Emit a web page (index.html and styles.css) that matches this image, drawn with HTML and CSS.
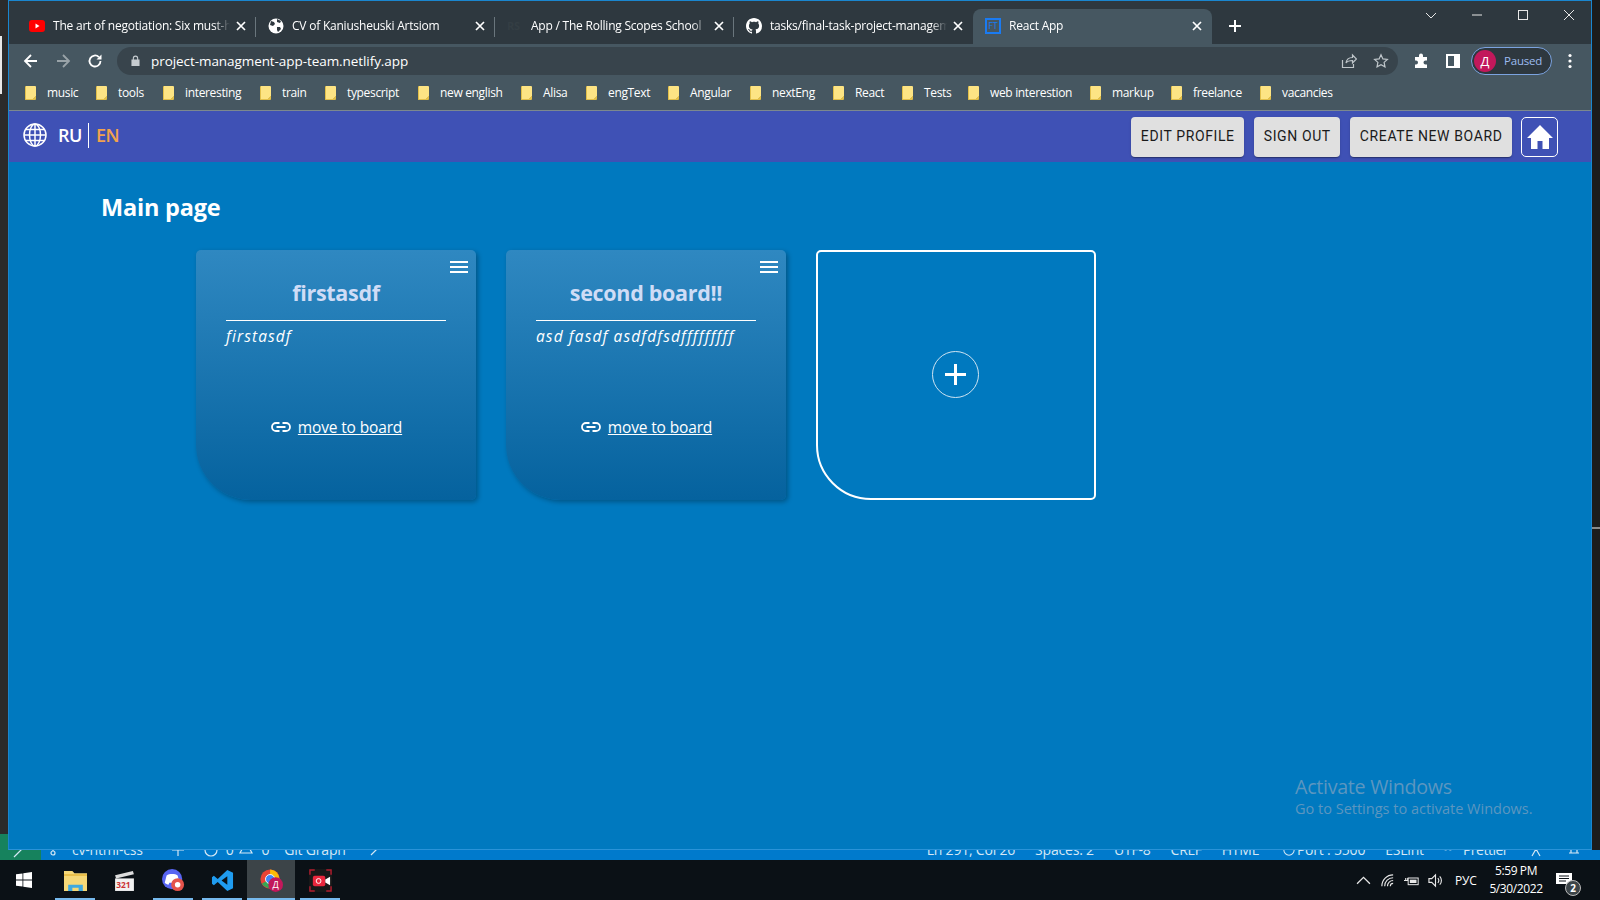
FILE: index.html
```html
<!DOCTYPE html>
<html lang="en">
<head>
<meta charset="utf-8">
<title>React App</title>
<link rel="stylesheet" href="styles.css">
</head>
<body>
<div class="desktop">
  <div class="upper">
    <div class="strip-left"><span class="strip-mark"></span></div>
    <div class="browser">
      <div class="tabstrip">
        <div class="tab">
          <svg class="fav" viewBox="0 0 16 12"><rect width="16" height="12" rx="3" fill="#f00"/><path d="M6.500 3.500v5l4-2.500z" fill="#fff"/></svg>
          <span class="tab-title">The art of negotiation: Six must-have skills</span>
          <svg class="tab-x" viewBox="0 0 10 10"><path d="M1 1l8 8M9 1l-8 8"/></svg>
        </div>
        <div class="tab">
          <svg class="fav" viewBox="0 0 16 16"><circle cx="8" cy="8" r="7.500" fill="#fff"/><path d="M3 3l3 1 1 2-2 2-3-1zM9 9l3 0 1 2-3 3-1-2zM9 1l4 2-1 2-3-1z" fill="#2e383f"/></svg>
          <span class="tab-title">CV of Kaniusheuski Artsiom</span>
          <svg class="tab-x" viewBox="0 0 10 10"><path d="M1 1l8 8M9 1l-8 8"/></svg>
        </div>
        <div class="tab">
          <span class="fav fav-rs">RS</span>
          <span class="tab-title">App / The Rolling Scopes School</span>
          <svg class="tab-x" viewBox="0 0 10 10"><path d="M1 1l8 8M9 1l-8 8"/></svg>
        </div>
        <div class="tab">
          <svg class="fav" viewBox="0 0 16 16"><path fill="#fff" d="M8 0C3.580 0 0 3.580 0 8c0 3.540 2.290 6.530 5.470 7.590.4.070.55-.17.55-.38 0-.19-.01-.82-.01-1.490-2.010.37-2.530-.49-2.690-.94-.09-.23-.48-.94-.82-1.130-.28-.15-.68-.52-.01-.53.63-.01 1.080.58 1.230.82.72 1.210 1.870.87 2.330.66.070-.52.28-.87.51-1.070-1.780-.2-3.640-.89-3.640-3.950 0-.87.31-1.590.82-2.150-.08-.2-.36-1.020.08-2.120 0 0 .67-.21 2.200.82.640-.18 1.320-.27 2-.27s1.360.09 2 .27c1.530-1.040 2.200-.82 2.200-.82.44 1.100.16 1.920.08 2.120.51.560.82 1.270.82 2.150 0 3.070-1.870 3.750-3.650 3.950.29.250.54.730.54 1.480 0 1.070-.01 1.930-.01 2.200 0 .21.150.46.550.38A8.010 8.010 0 0 0 16 8c0-4.420-3.580-8-8-8z"/></svg>
          <span class="tab-title">tasks/final-task-project-management.md at main</span>
          <svg class="tab-x" viewBox="0 0 10 10"><path d="M1 1l8 8M9 1l-8 8"/></svg>
        </div>
        <div class="tab tab-active">
          <span class="fav fav-ft">FT</span>
          <span class="tab-title">React App</span>
          <svg class="tab-x" viewBox="0 0 10 10"><path d="M1 1l8 8M9 1l-8 8"/></svg>
        </div>
        <svg class="tab-new" viewBox="0 0 12 12"><path d="M6 0v12M0 6h12"/></svg>
        <div class="win-controls">
          <svg class="win-btn" viewBox="0 0 12 12"><path d="M1 4l5 5 5-5"/></svg>
          <svg class="win-btn" viewBox="0 0 12 12"><path d="M1 6h10"/></svg>
          <svg class="win-btn" viewBox="0 0 12 12"><rect x="1.500" y="1.500" width="9" height="9"/></svg>
          <svg class="win-btn" viewBox="0 0 12 12"><path d="M1 1l10 10M11 1L1 11"/></svg>
        </div>
      </div>
      <div class="toolbar">
        <svg class="nav-ico" viewBox="0 0 16 16"><path d="M14 8H2M8 2L2 8l6 6" /></svg>
        <svg class="nav-ico nav-off" viewBox="0 0 16 16"><path d="M2 8h12M8 2l6 6-6 6"/></svg>
        <svg class="nav-ico" viewBox="0 0 16 16"><path d="M13.500 8a5.500 5.500 0 1 1-1.600-3.900"/><path class="solid" d="M14.500 1.500v5h-5z"/></svg>
        <div class="omnibox">
          <svg class="lock" viewBox="0 0 10 12"><path d="M2 5V3.500a3 3 0 0 1 6 0V5h1.500v7H.5V5zM3.200 5h3.600V3.500a1.800 1.800 0 0 0-3.600 0z"/></svg>
          <span class="url">project-managment-app-team.netlify.app</span>
          <svg class="omni-ico" viewBox="0 0 16 16"><path d="M1.500 7v7.500h11V11"/><path d="M5 10c.5-3.500 3-5.500 6.500-5.500V2l4 4-4 4V7.500C9 7.500 6.500 8 5 10z"/></svg>
          <svg class="omni-ico" viewBox="0 0 16 16"><path d="M8 1.800l1.900 4.100 4.500.5-3.300 3 .9 4.500L8 11.700l-4 2.200.9-4.500-3.300-3 4.500-.5z"/></svg>
        </div>
        <svg class="ext-ico" viewBox="0 0 16 16"><path d="M6 2.500a2 2 0 0 1 4 0V4h4v3.500h-1.500a2 2 0 0 0 0 4H14V15H2v-3.500h1a2 2 0 0 0 0-4H2V4h4z"/></svg>
        <svg class="panel-ico" viewBox="0 0 14 14"><path fill="#fff" fill-rule="evenodd" d="M0 0h14v14H0zM2 2v10h6V2z"/></svg>
        <div class="profile"><span class="avatar">Д</span><span class="paused">Paused</span></div>
        <svg class="kebab" viewBox="0 0 4 16"><circle cx="2" cy="2.500" r="1.600"/><circle cx="2" cy="8" r="1.600"/><circle cx="2" cy="13.500" r="1.600"/></svg>
      </div>
      <div class="bookmarks">
        <div class="bm"><i class="folder"></i><span>music</span></div>
        <div class="bm"><i class="folder"></i><span>tools</span></div>
        <div class="bm"><i class="folder"></i><span>interesting</span></div>
        <div class="bm"><i class="folder"></i><span>train</span></div>
        <div class="bm"><i class="folder"></i><span>typescript</span></div>
        <div class="bm"><i class="folder"></i><span>new english</span></div>
        <div class="bm"><i class="folder"></i><span>Alisa</span></div>
        <div class="bm"><i class="folder"></i><span>engText</span></div>
        <div class="bm"><i class="folder"></i><span>Angular</span></div>
        <div class="bm"><i class="folder"></i><span>nextEng</span></div>
        <div class="bm"><i class="folder"></i><span>React</span></div>
        <div class="bm"><i class="folder"></i><span>Tests</span></div>
        <div class="bm"><i class="folder"></i><span>web interestion</span></div>
        <div class="bm"><i class="folder"></i><span>markup</span></div>
        <div class="bm"><i class="folder"></i><span>freelance</span></div>
        <div class="bm"><i class="folder"></i><span>vacancies</span></div>
      </div>
      <div class="page">
        <header class="app-header">
          <svg class="globe" viewBox="0 0 24 24"><circle cx="12" cy="12" r="11"/><ellipse cx="12" cy="12" rx="5.500" ry="11"/><path d="M12 1v22M1 12h22M3 6.500h18M3 17.500h18"/></svg>
          <span class="lang">RU</span>
          <span class="lang lang-on">EN</span>
          <div class="header-actions">
            <button class="mui-btn">Edit profile</button>
            <button class="mui-btn">Sign out</button>
            <button class="mui-btn">Create new board</button>
            <button class="home-btn"><svg viewBox="0 0 28 28"><path d="M14 2L1 15h4v11h6.500v-8h5v8H23V15h4z"/></svg></button>
          </div>
        </header>
        <main class="content">
          <h1 class="page-title">Main page</h1>
          <div class="boards">
            <article class="board">
              <svg class="menu" viewBox="0 0 18 12"><path d="M0 1h18M0 6h18M0 11h18"/></svg>
              <h2 class="board-title">firstasdf</h2>
              <p class="board-desc">firstasdf</p>
              <div class="board-link">
                <svg class="chain" viewBox="0 0 20 10"><path d="M8.500 1H5a4 4 0 0 0 0 8h3.500M11.500 1H15a4 4 0 0 1 0 8h-3.500M5.500 5h9"/></svg>
                <a href="#">move to board</a>
              </div>
            </article>
            <article class="board">
              <svg class="menu" viewBox="0 0 18 12"><path d="M0 1h18M0 6h18M0 11h18"/></svg>
              <h2 class="board-title">second board!!</h2>
              <p class="board-desc">asd fasdf asdfdfsdfffffffff</p>
              <div class="board-link">
                <svg class="chain" viewBox="0 0 20 10"><path d="M8.500 1H5a4 4 0 0 0 0 8h3.500M11.500 1H15a4 4 0 0 1 0 8h-3.500M5.500 5h9"/></svg>
                <a href="#">move to board</a>
              </div>
            </article>
            <article class="board-add">
              <div class="add-circle"><svg viewBox="0 0 21 21"><path d="M10.500 0v21M0 10.500h21"/></svg></div>
            </article>
          </div>
          <div class="activate">
            <div class="activate-h">Activate Windows</div>
            <div class="activate-s">Go to Settings to activate Windows.</div>
          </div>
        </main>
      </div>
    </div>
    <div class="strip-right"><span class="strip-thumb"></span></div>
  </div>
  <div class="statusbar">
    <div class="status-remote"><svg class="st-ico st-remote" viewBox="0 0 12 12"><path d="M2 10l4-4M10 2L6 6"/></svg></div>
    <svg class="st-ico st-branch" viewBox="0 0 12 12"><circle cx="6" cy="9" r="2"/><path d="M6 7V0"/></svg>
    <span class="st st-a">cv-html-css</span>
    <svg class="st-ico st-sync" viewBox="0 0 12 12"><path d="M0 6h12M6 0v12"/></svg>
    <svg class="st-ico st-err" viewBox="0 0 14 14"><circle cx="7" cy="7" r="6"/></svg>
    <span class="st st-zero">0</span>
    <svg class="st-ico st-warn" viewBox="0 0 14 14"><path d="M1 13h12L7 2z"/></svg>
    <span class="st st-zero">0</span>
    <span class="st st-c">Git Graph</span>
    <svg class="st-ico st-pen" viewBox="0 0 12 12"><path d="M2 11l8-8"/></svg>
    <div class="status-right">
      <span class="st">Ln 291, Col 26</span>
      <span class="st">Spaces: 2</span>
      <span class="st">UTF-8</span>
      <span class="st">CRLF</span>
      <span class="st">HTML</span>
      <div class="st-pair"><svg class="st-ico st-port" viewBox="0 0 14 14"><circle cx="7" cy="7" r="6"/></svg><span class="st">Port : 5500</span></div>
      <span class="st">ESLint</span>
      <div class="st-pair st-wide"><svg class="st-ico st-tiny" viewBox="0 0 12 12"><path d="M1 6h3M8 6h3"/></svg><span class="st st-narrow">Prettier</span></div>
      <svg class="st-ico" viewBox="0 0 12 12"><path d="M2 12l4-7 4 7"/></svg>
      <svg class="st-ico st-bell" viewBox="0 0 12 12"><path d="M1 9h10M3 4v5M9 4v5"/></svg>
    </div>
  </div>
  <footer class="taskbar">
    <svg class="start" viewBox="0 0 16 16"><path d="M0 2.300l6.500-.9v6.200H0zM7.300 1.300L16 0v7.600H7.300zM0 8.400h6.500v6.200L0 13.700zM7.300 8.400H16V16l-8.700-1.300z"/></svg>
    <div class="task task-on">
      <svg viewBox="0 0 22 20"><path d="M0 1h8l2 2h12v17H0z" fill="#f6d877"/><path d="M0 4h22v1.500H0z" fill="#e8b93f"/><path d="M4 20v-6h14v6h-4v-3H8v3z" fill="#3fa9e0"/></svg>
    </div>
    <div class="task">
      <svg viewBox="0 0 22 22"><path d="M2 6l17-4 1 3L3 9z" fill="#ddd"/><rect x="2" y="9" width="18" height="12" fill="#f2f2f2"/><text x="3" y="18.500" class="count">321</text></svg>
    </div>
    <div class="task task-on">
      <svg viewBox="0 0 25 25"><circle cx="11" cy="11" r="11" fill="#5865f2"/><path d="M5 7c3-2 9-2 12 0l2 8c-1 1-3 2-4 2l-1-2h-6l-1 2c-1 0-3-1-4-2z" fill="#fff"/><circle cx="17" cy="17" r="7" fill="#e5534b"/><circle cx="17" cy="17" r="3" fill="#fff"/></svg>
    </div>
    <div class="task task-on">
      <svg viewBox="0 0 24 24"><path d="M17 1l6 3v16l-6 3-10-9.500L3 17l-2-1.500V8.500L3 7l4 3.500z" fill="#1f9cf0"/><path d="M17 7.500L11 12l6 4.500z" fill="#0b1116"/></svg>
    </div>
    <div class="task task-on task-active">
      <svg viewBox="0 0 25 25"><circle cx="11" cy="11" r="10.500" fill="#ea4335"/><path d="M11 11L2 16a10.500 10.500 0 0 0 13 4z" fill="#34a853"/><path d="M11 .5a10.500 10.500 0 0 1 9 15l-5 5 -4-9z" fill="#fbbc05"/><circle cx="11" cy="11" r="5" fill="#4285f4" stroke="#fff"/><circle cx="17" cy="17" r="8" fill="#c2185b"/><text x="17" y="20.500" class="avatar-t">Д</text></svg>
    </div>
    <div class="task task-on">
      <svg viewBox="0 0 24 24"><rect width="24" height="24" rx="3" fill="#181818"/><path d="M1 6V1h5M18 1h5v5M23 18v5h-5M6 23H1v-5" fill="none" stroke="#b01c2e" stroke-width="1.500"/><rect x="4" y="7" width="13" height="11" rx="2" fill="#e8263c"/><path d="M17 11l5-3v9l-5-3z" fill="#fff"/><circle cx="10" cy="12.500" r="2.500" fill="none" stroke="#fff"/></svg>
    </div>
    <div class="tray">
      <svg class="tray-ico" viewBox="0 0 14 14"><path d="M1 10l6-6 6 6"/></svg>
      <svg class="tray-ico" viewBox="0 0 16 16"><path d="M2 14a12 12 0 0 1 12-12M5 14a9 9 0 0 1 9-9M8 14a6 6 0 0 1 6-6M11 14a3 3 0 0 1 3-3"/></svg>
      <svg class="tray-ico" viewBox="0 0 18 14"><rect x="5" y="4" width="12" height="8"/><path d="M0 7h5M2 4v3M4 4v3" /><rect class="fill" x="7" y="6" width="8" height="4"/></svg>
      <svg class="tray-ico" viewBox="0 0 16 16"><path d="M1 6h3l4-4v12l-4-4H1zM10.500 5.500a3.500 3.500 0 0 1 0 5M12.500 3.500a6.500 6.500 0 0 1 0 9"/></svg>
      <span class="tray-lang">РУС</span>
      <div class="clock"><span>5:59 PM</span><span>5/30/2022</span></div>
      <div class="notif">
        <svg viewBox="0 0 16 16"><path fill="#fff" d="M0 1h16v11H0z"/><path d="M3 4h10M3 6.500h10M3 9h7" stroke="#0b1116"/></svg>
        <span class="notif-badge">2</span>
      </div>
    </div>
  </footer>
</div>
</body>
</html>
```
FILE: styles.css
```css
* { box-sizing: border-box; }
html, body { margin: 0; padding: 0; }
body { width: 1600px; height: 900px; overflow: hidden; font-family: "Open Sans", "Liberation Sans", sans-serif; background: #0b1116; }
.desktop { display: flex; flex-direction: column; width: 1600px; height: 900px; }

.upper { display: flex; height: 850px; flex: none; }
.strip-left { width: 8px; flex: none; background: linear-gradient(#2b2b2b 834px, #16825d 834px); padding-top: 36px; }
.strip-mark { display: block; width: 2px; height: 58px; background: #e8e8e8; }
.strip-right { width: 8px; flex: none; background: #1c1c1c; padding-top: 527px; }
.strip-thumb { display: block; height: 2px; background: #8a8a8a; }

.browser { flex: 1; display: flex; flex-direction: column; border: 1px solid #1a86cf; border-bottom-color: #2a93d8; min-width: 0; }

.tabstrip { height: 43px; flex: none; display: flex; align-items: flex-end; background: #2e383f; padding-left: 8px; position: relative; }
.tab { width: 239px; height: 35px; flex: none; display: flex; align-items: center; padding: 0 10px 2px 12px; position: relative; color: #fff; font-size: 12px; letter-spacing: -0.22px; }
.tab:not(.tab-active):not(:nth-child(4))::after { content: ""; position: absolute; right: 0; top: 8px; height: 20px; width: 1px; background: #6a767d; }
.tab-active { background: #465761; border-radius: 8px 8px 0 0; }
.fav { width: 16px; height: 16px; flex: none; margin-right: 8px; }
.fav-rs { font-size: 11px; font-weight: 700; color: #343e44; line-height: 16px; }
.fav-ft { border: 2px solid #1a7bf2; color: #1a7bf2; font-size: 9px; line-height: 12px; text-align: center; letter-spacing: 0; }
.tab-title { flex: 1; min-width: 0; white-space: nowrap; overflow: hidden; -webkit-mask-image: linear-gradient(to left, transparent, #000 16px); mask-image: linear-gradient(to left, transparent, #000 16px); }
.tab-x { width: 10px; height: 10px; flex: none; margin-left: 6px; fill: none; stroke: #fff; stroke-width: 1.700; }
.tab-new { width: 12px; height: 12px; flex: none; margin: 0 0 12px 17px; fill: none; stroke: #fff; stroke-width: 2; }
.win-controls { margin-left: auto; align-self: flex-start; display: flex; gap: 34px; padding: 8px 16px 0 0; }
.win-btn { width: 12px; height: 12px; fill: none; stroke: #e8e8e8; stroke-width: 1; }

.toolbar { height: 33px; flex: none; display: flex; align-items: center; background: #465761; padding-left: 14px; }
.nav-ico { width: 16px; height: 16px; flex: none; margin-right: 16px; fill: none; stroke: #fff; stroke-width: 1.800; }
.nav-ico .solid { fill: #fff; stroke: none; }
.nav-off { opacity: .45; }
.omnibox { flex: none; width: 1281px; height: 28px; margin-left: -2px; border-radius: 14px; background: #38444c; display: flex; align-items: center; padding: 0 9px 0 14px; color: #fff; font-size: 13.500px; letter-spacing: -0.07px; }
.lock { width: 9px; height: 11px; flex: none; fill: #c6ccd0; margin-right: 11px; }
.url { flex: 1; }
.omni-ico { width: 16px; height: 16px; flex: none; margin-left: 16px; fill: none; stroke: #bfc6ca; stroke-width: 1.200; }
.ext-ico { width: 16px; height: 16px; flex: none; margin-left: 15px; fill: #fff; }
.panel-ico { width: 14px; height: 14px; flex: none; margin-left: 17px; }
.profile { flex: none; display: flex; align-items: center; width: 81px; height: 28px; margin-left: 11px; border: 1px solid #7ba3e0; border-radius: 14px; background: #2e383f; padding-left: 2px; }
.avatar { width: 22px; height: 22px; border-radius: 50%; background: #c2185b; color: #fff; font-size: 13px; line-height: 22px; text-align: center; flex: none; }
.paused { color: #9dbcf0; font-size: 11.500px; margin-left: 8px; letter-spacing: -0.2px; }
.kebab { width: 4px; height: 16px; flex: none; margin-left: 16px; fill: #fff; }

.bookmarks { height: 34px; flex: none; display: grid; grid-template-columns: 71px 67px 97px 65px 93px 103px 65px 82px 82px 83px 69px 66px 122px 81px 89px 1fr; align-items: center; background: #465761; border-bottom: 1px solid #7c888e; padding: 0 0 2px 16px; color: #fff; font-size: 12px; letter-spacing: -0.34px; }
.bm { display: flex; align-items: center; gap: 11px; white-space: nowrap; }
.folder { display: block; width: 11px; height: 14px; background: linear-gradient(135deg, #fde484 85%, #e2bf4a 85%); border-bottom: 1px solid #e2bf4a; border-left: 1px solid #e2bf4a; border-radius: 1px; flex: none; }

.page { flex: 1; min-height: 0; display: flex; flex-direction: column; background: #0079bf; }
.app-header { height: 51px; flex: none; display: flex; align-items: center; background: #3f51b5; padding: 0 33px 0 14px; color: #fff; }
.globe { width: 24px; height: 24px; flex: none; fill: none; stroke: #fff; stroke-width: 1.500; margin: 0 11px 3px 0; }
.lang { font-size: 18px; font-weight: 600; line-height: 25px; letter-spacing: -0.5px; padding-right: 6px; margin: 0 7px 3px 0; }
.lang:first-of-type { border-right: 1px solid #fff; }
.lang-on { color: #f2a24c; border: 0; }
.header-actions { margin-left: auto; display: flex; gap: 10px; align-items: center; }
.mui-btn { height: 40px; padding: 0 9.500px 1px; border: 0; border-radius: 4px; background: #e0e0e0; color: #1a1a1a; font: 400 14px/1 Roboto, sans-serif; letter-spacing: .62px; text-transform: uppercase; white-space: nowrap; box-shadow: 0 2px 1px -1px rgba(0,0,0,.2), 0 1px 1px rgba(0,0,0,.14), 0 1px 3px rgba(0,0,0,.12); }
.home-btn { width: 37px; height: 40px; padding: 0; margin-left: -1px; background: transparent; border: 1px solid #fff; border-radius: 5px; display: flex; align-items: center; justify-content: center; }
.home-btn svg { width: 28px; height: 28px; fill: #fff; }

.content { flex: 1; min-height: 0; position: relative; padding: 28px 0 0 92px; color: #fff; }
.page-title { margin: 0 0 26px; font-size: 23.500px; line-height: 34px; font-weight: 700; letter-spacing: -0.2px; }
.boards { display: flex; gap: 30px; padding-left: 95px; }
.board { position: relative; width: 280px; height: 250px; display: flex; flex-direction: column; padding: 24px 30px 0; border-radius: 5px 5px 5px 55px; background: linear-gradient(#2f88c1, #05629e); box-shadow: 2px 2px 5px rgba(0,0,0,.3); }
.menu { position: absolute; top: 11px; right: 8px; width: 18px; height: 12px; stroke: #fff; stroke-width: 2; fill: none; }
.board-title { margin: 0; padding-bottom: 9px; border-bottom: 1px solid #fff; text-align: center; font-size: 21.500px; line-height: 37px; font-weight: 700; color: #cfdcf6; letter-spacing: -0.3px; }
.board-desc { margin: 3px 0 0; font-size: 15.500px; line-height: 24px; font-style: italic; letter-spacing: 1.100px; color: #fff; height: 91px; }
.board-link { display: flex; justify-content: center; align-items: center; gap: 7px; padding-left: 1px; font-size: 15.500px; line-height: 24px; letter-spacing: -0.15px; }
.board-link a { color: #fff; }
.chain { width: 20px; height: 10px; flex: none; fill: none; stroke: #fff; stroke-width: 1.800; }
.board-add { width: 280px; height: 250px; padding: 0 2px 2px 0; border: 2px solid #fff; border-radius: 5px 5px 5px 55px; display: flex; align-items: center; justify-content: center; }
.add-circle { width: 47px; height: 47px; border: 1px solid #cfe4f2; border-radius: 50%; display: flex; align-items: center; justify-content: center; }
.add-circle svg { width: 21px; height: 21px; stroke: #fff; stroke-width: 3; fill: none; }

.activate { position: absolute; left: 1286px; top: 611px; color: #5c96bf; white-space: nowrap; }
.activate-h { font-size: 19.700px; line-height: 27px; letter-spacing: -0.3px; }
.activate-s { font-size: 14.500px; line-height: 18px; }

.statusbar { height: 10px; flex: none; display: flex; align-items: flex-start; overflow: hidden; background: #007acc; color: #d5e8f5; font-size: 14px; position: relative; }
.status-remote { width: 41px; height: 10px; flex: none; background: #16825d; padding-left: 12px; }
.st { display: block; flex: none; height: 10px; line-height: 0; white-space: nowrap; letter-spacing: -0.2px; }
.st-ico { display: block; flex: none; width: 12px; height: 12px; margin-top: -6px; fill: none; stroke: #d5e8f5; stroke-width: 1.200; overflow: visible; }
.st-remote { margin-top: -3px; }
.st-branch { margin-left: 6px; }
.st-a { margin-left: 13px; }
.st-sync { margin-left: 29px; }
.st-err { margin-left: 20px; width: 14px; height: 14px; margin-top: -7px; }
.st-zero { margin-left: 8px; }
.st-warn { margin-left: 6px; width: 14px; height: 14px; margin-top: -10px; }
.st-c { margin-left: 15px; }
.st-pen { margin-left: 23px; }
.status-right { margin-left: auto; display: flex; gap: 20px; padding-right: 20px; align-items: flex-start; }
.st-pair { display: flex; gap: 2px; }
.st-port { margin-left: 4px; }
.st-wide { gap: 11px; margin-right: 2px; }
.st-narrow { letter-spacing: -0.5px; }
.st-tiny { width: 8px; }
.st-bell { margin-left: 6px; }

.taskbar { height: 40px; flex: none; display: flex; align-items: center; gap: 1px; background: #0b1116; position: relative; }
.start { width: 16px; height: 16px; flex: none; fill: #fff; margin: 0 18px 0 16px; }
.task { width: 48px; height: 40px; flex: none; display: flex; align-items: center; justify-content: center; }
.task svg { width: 23px; height: 23px; }
.task-on { background: linear-gradient(#76b9ed, #76b9ed) bottom center / 40px 2px no-repeat; }
.task-active { background: linear-gradient(#76b9ed, #76b9ed) bottom center / 48px 2px no-repeat, #3c4448; }
.count { font: 700 8px "Open Sans", sans-serif; fill: #c33; }
.avatar-t { font: 400 10px "Open Sans", sans-serif; fill: #fff; text-anchor: middle; }
.tray { margin-left: auto; display: flex; align-items: center; color: #fff; height: 40px; padding-right: 12px; }
.tray-ico { width: 15px; height: 15px; flex: none; margin-right: 9px; fill: none; stroke: #e8e8e8; stroke-width: 1.200; }
.tray-ico .fill { fill: #e8e8e8; stroke: none; }
.tray-lang { font-size: 12px; letter-spacing: -0.2px; margin-left: 3px; width: 30px; }
.clock { display: flex; flex-direction: column; align-items: center; font-size: 12px; line-height: 18px; letter-spacing: -0.4px; width: 60px; margin: 0 6px 0 1px; }
.notif { position: relative; width: 36px; height: 40px; display: flex; align-items: center; padding-left: 4px; }
.notif svg { width: 16px; height: 16px; }
.notif-badge { position: absolute; left: 13px; top: 20px; width: 16px; height: 16px; border-radius: 50%; background: #3c4448; border: 1px solid #bbb; font-size: 10px; line-height: 14px; text-align: center; font-weight: 700; }
```
